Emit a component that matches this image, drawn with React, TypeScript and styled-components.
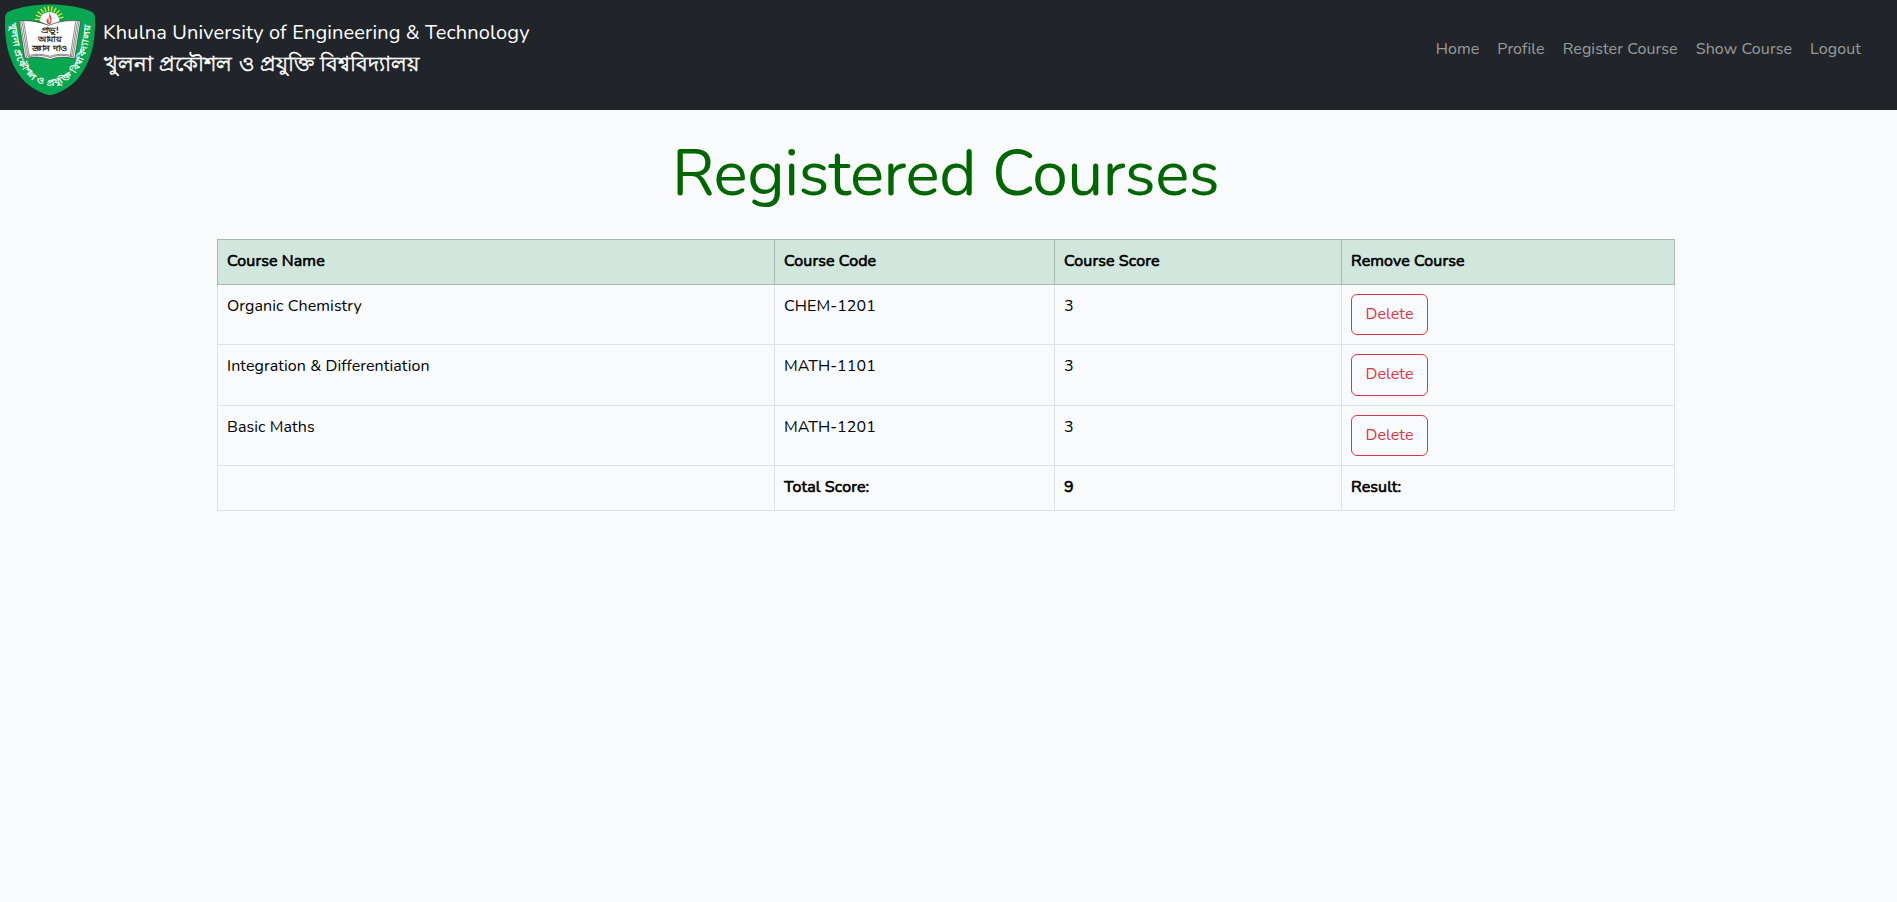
import React from 'react';
import styled, { createGlobalStyle } from 'styled-components';

const GlobalStyle = createGlobalStyle`
  *, *::before, *::after { box-sizing: border-box; }
  body {
    margin: 0;
    min-height: 100vh;
    background: #f8fafc;
    color: #000;
    font-family: Nunito, Lato, 'Noto Sans', sans-serif;
    font-size: 16px;
    line-height: 28px;
  }
`;

const Navbar = styled.header`
  display: flex;
  justify-content: space-between;
  height: 110px;
  padding-right: 36px;
  background: #212529;
`;

const Brand = styled.div`
  display: flex;
  gap: 3px;
  color: #fff;
`;

const Logo = styled.svg`
  width: 100px;
  height: 100px;
`;

const BrandText = styled.div`
  padding-top: 18px;
  white-space: nowrap;
`;

const EnglishName = styled.div`
  font-size: 20px;
  line-height: 30px;
  letter-spacing: 0.13px;
`;

const BengaliName = styled.div`
  padding-left: 1px;
  font-size: 21.35px;
  line-height: 32px;
  word-spacing: 0.8px;
  -webkit-text-stroke: 0.5px #fff;
`;

const NavLinks = styled.nav`
  display: flex;
  gap: 18px;
  padding-top: 35px;
`;

const NavLink = styled.a`
  color: rgba(255, 255, 255, 0.55);
  text-decoration: none;
  letter-spacing: 0.1px;
`;

const Main = styled.main`
  width: 1457px;
  margin-left: 217px;
`;

const Title = styled.h1`
  margin: 0;
  height: 129px;
  padding-top: 26px;
  color: #006600;
  font-size: 64px;
  font-weight: 400;
  line-height: 76px;
  letter-spacing: -0.5px;
  text-align: center;
`;

const Table = styled.table`
  width: 100%;
  table-layout: fixed;
  border-collapse: collapse;
`;

const Row = styled.tr<{ $height: number }>`
  height: ${(p) => p.$height}px;
`;

const Cell = styled.td`
  padding: 7px 9px 0;
  border: 1px solid #dee2e6;
  font-weight: 400;
  letter-spacing: 0.08px;
  text-align: left;
  vertical-align: top;
`;

const StrongCell = styled(Cell)`
  letter-spacing: 0.11px;
  -webkit-text-stroke: 0.65px #000;
`;

const HeadCell = styled(StrongCell).attrs({ as: 'th' })`
  background: #d1e7dd;
  border-color: #a7b9b1;
`;

const ActionCell = styled(Cell)`
  padding-top: 9px;
`;

const DeleteButton = styled.button<{ $height: number }>`
  display: block;
  width: 77px;
  height: ${(p) => p.$height}px;
  padding: 0 0 2px;
  border: 1px solid #dc3545;
  border-radius: 6px;
  background: transparent;
  color: #dc3545;
  font: inherit;
  letter-spacing: 0.1px;
`;

const links = ['Home', 'Profile', 'Register Course', 'Show Course', 'Logout'];

const courses = [
  { name: 'Organic Chemistry', code: 'CHEM-1201', score: 3, height: 60, button: 41 },
  { name: 'Integration & Differentiation', code: 'MATH-1101', score: 3, height: 61, button: 42 },
  { name: 'Basic Maths', code: 'MATH-1201', score: 3, height: 60, button: 41 },
];

function UniversityLogo() {
  return (
    <Logo viewBox="0 0 300 300">
      <path
        d="M150 13C195 14 242 22 272 34Q285 39 285 54C287 125 275 184 236 233C210 264 178 279 150 286C122 279 90 264 64 233C25 184 13 125 15 54Q15 39 28 34C58 22 105 14 150 13Z"
        fill="#07a650"
      />
      <g stroke="#e4e23a" strokeWidth="4">
        {[-84, -68, -52, -36, -20, -4, 12, 28, 44, 60, 76].map((a) => (
          <path key={a} d="M148 34V18" transform={`rotate(${a} 148 62)`} />
        ))}
      </g>
      <path d="M119 64Q121 37 148 36Q176 37 179 64L149 78Z" fill="#fff" />
      <path d="M148 35C150 48 158 52 154 63Q153 74 144 73Q137 65 141 55L144 61Q149 49 148 35Z" fill="#ed3e37" />
      <path d="M148 50Q154 64 148 68Q143 66 148 50Z" fill="#fff" />
      <path
        d="M57 63Q100 58 146 76Q195 56 242 64L224 176Q179 166 150 179Q111 165 80 176L74 171Z"
        fill="#fff"
        stroke="#353535"
        strokeWidth="2"
      />
      <path
        d="M61 65L80 174M66 64L84 171M71 64L88 169M237 66L219 173M232 67L215 170M227 66L211 167M84 171Q120 160 150 173Q180 160 219 171M88 166Q120 158 150 169Q180 158 215 166"
        fill="none"
        stroke="#555"
        strokeWidth="2"
      />
      <g fill="#1c1c1c" stroke="#1c1c1c" strokeWidth="0.8" fontFamily="Lato, 'Noto Sans', sans-serif" fontSize="24" textAnchor="middle">
        <text x="149" y="99" textLength="54" lengthAdjust="spacingAndGlyphs">প্রভু!</text>
        <text x="149" y="126" textLength="72" lengthAdjust="spacingAndGlyphs">আমায়</text>
        <text x="149" y="153" textLength="108" lengthAdjust="spacingAndGlyphs">জ্ঞান দাও</text>
      </g>
      <path id="crest-arc" d="M31 68C34 150 58 250 150 256C242 250 268 150 272 67" fill="none" />
      <text fill="#fff" stroke="#fff" strokeWidth="0.9" fontFamily="Lato, 'Noto Sans', sans-serif" fontSize="26">
        <textPath href="#crest-arc" textLength="485" lengthAdjust="spacingAndGlyphs">খুলনা প্রকৌশল ও প্রযুক্তি বিশ্ববিদ্যালয়</textPath>
      </text>
    </Logo>
  );
}

export default function App() {
  return (
    <>
      <GlobalStyle />
      <Navbar>
        <Brand>
          <UniversityLogo />
          <BrandText>
            <EnglishName>Khulna University of Engineering &amp; Technology</EnglishName>
            <BengaliName lang="bn">খুলনা প্রকৌশল ও প্রযুক্তি বিশ্ববিদ্যালয়</BengaliName>
          </BrandText>
        </Brand>
        <NavLinks>
          {links.map((label) => (
            <NavLink key={label}>{label}</NavLink>
          ))}
        </NavLinks>
      </Navbar>
      <Main>
        <Title>Registered Courses</Title>
        <Table>
          <colgroup>
            <col width="557" />
            <col width="280" />
            <col width="287" />
            <col width="333" />
          </colgroup>
          <thead>
            <Row $height={45}>
              <HeadCell>Course Name</HeadCell>
              <HeadCell>Course Code</HeadCell>
              <HeadCell>Course Score</HeadCell>
              <HeadCell>Remove Course</HeadCell>
            </Row>
          </thead>
          <tbody>
            {courses.map((c) => (
              <Row key={c.name} $height={c.height}>
                <Cell>{c.name}</Cell>
                <Cell>{c.code}</Cell>
                <Cell>{c.score}</Cell>
                <ActionCell>
                  <DeleteButton $height={c.button}>Delete</DeleteButton>
                </ActionCell>
              </Row>
            ))}
            <Row $height={45}>
              <Cell />
              <StrongCell>Total Score:</StrongCell>
              <StrongCell>9</StrongCell>
              <StrongCell>Result:</StrongCell>
            </Row>
          </tbody>
        </Table>
      </Main>
    </>
  );
}
